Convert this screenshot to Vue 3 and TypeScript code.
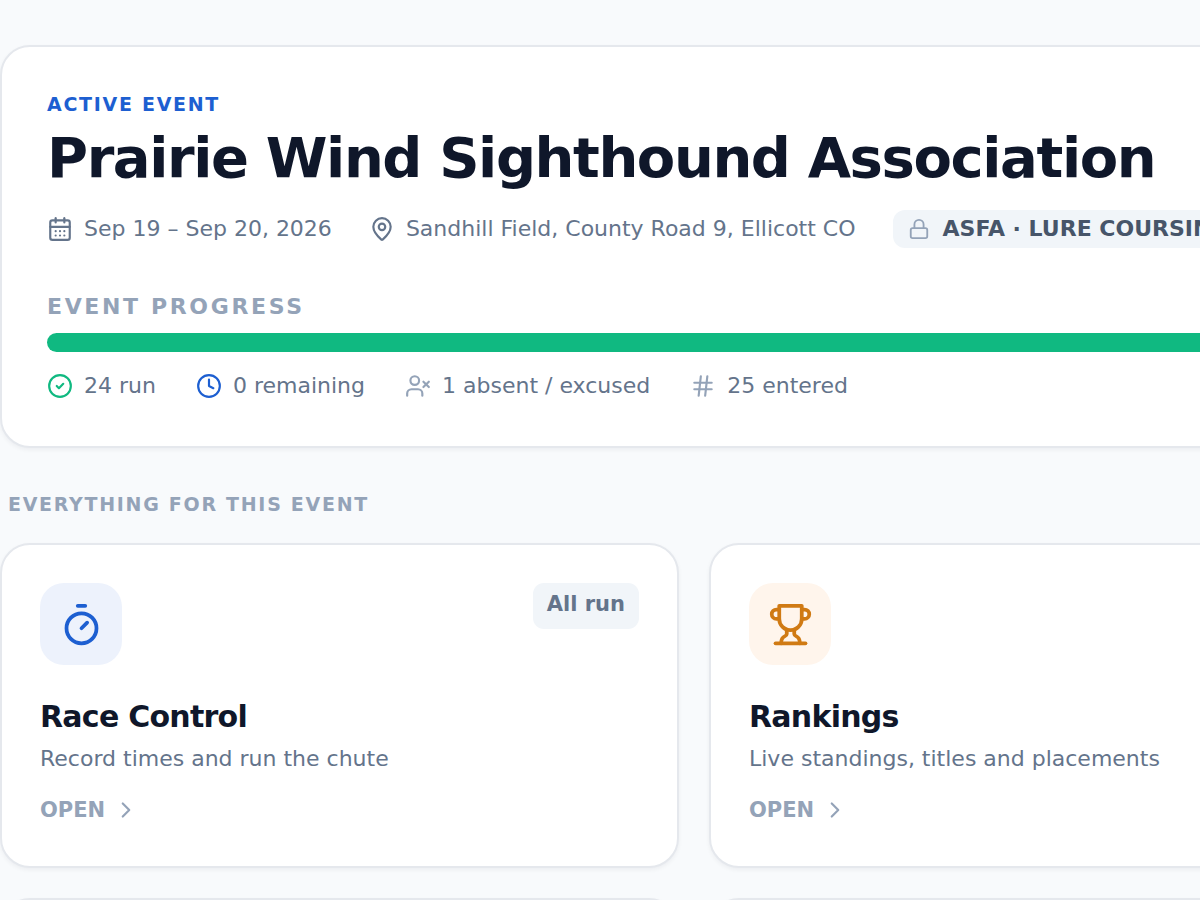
<script setup lang="ts">
interface Tile {
  title: string
  text: string
  tone: 'blue' | 'amber'
  icon: string[]
  badge?: string
}

interface Stat {
  label: string
  tone: 'green' | 'blue' | 'muted'
  icon: string[]
}

const calendar = [
  'M8 2v4', 'M16 2v4', 'M5 4h14a2 2 0 0 1 2 2v14a2 2 0 0 1-2 2H5a2 2 0 0 1-2-2V6a2 2 0 0 1 2-2z', 'M3 10h18',
  'M8 14h.01', 'M12 14h.01', 'M16 14h.01', 'M8 18h.01', 'M12 18h.01', 'M16 18h.01',
]
const pin = [
  'M20 10c0 4.993-5.539 10.193-7.399 11.799a1 1 0 0 1-1.202 0C9.539 20.193 4 14.993 4 10a8 8 0 0 1 16 0',
  'M15 10a3 3 0 1 1-6 0 3 3 0 0 1 6 0z',
]
const lock = [
  'M5 11h14a2 2 0 0 1 2 2v7a2 2 0 0 1-2 2H5a2 2 0 0 1-2-2v-7a2 2 0 0 1 2-2z',
  'M7 11V7a5 5 0 0 1 10 0v4',
]
const ring = 'M22 12a10 10 0 1 1-20 0 10 10 0 0 1 20 0z'

const stats: Stat[] = [
  { label: '24 run', tone: 'green', icon: [ring, 'm9 12 2 2 4-4'] },
  { label: '0 remaining', tone: 'blue', icon: [ring, 'M12 6v6l4 2'] },
  {
    label: '1 absent / excused',
    tone: 'muted',
    icon: ['M16 21v-2a4 4 0 0 0-4-4H6a4 4 0 0 0-4 4v2', 'M13 7a4 4 0 1 1-8 0 4 4 0 0 1 8 0z', 'm17 8 5 5', 'm22 8-5 5'],
  },
  { label: '25 entered', tone: 'muted', icon: ['M4 9h16', 'M4 15h16', 'M10 3 8 21', 'M16 3l-2 18'] },
]

const tiles: Tile[] = [
  {
    title: 'Race Control',
    text: 'Record times and run the chute',
    tone: 'blue',
    badge: 'All run',
    icon: ['M10 2h4', 'm12 14 3-3', 'M20 14a8 8 0 1 1-16 0 8 8 0 0 1 16 0z'],
  },
  {
    title: 'Rankings',
    text: 'Live standings, titles and placements',
    tone: 'amber',
    icon: [
      'M6 9H4.5a2.5 2.5 0 0 1 0-5H6', 'M18 9h1.5a2.5 2.5 0 0 0 0-5H18', 'M4 22h16',
      'M10 14.66V17c0 .55-.47.98-.97 1.21C7.85 18.75 7 20.24 7 22',
      'M14 14.66V17c0 .55.47.98.97 1.21C16.15 18.75 17 20.24 17 22',
      'M18 2H6v7a6 6 0 0 0 12 0V2Z',
    ],
  },
]

const progress = 100
</script>

<template>
  <div class="page">
    <main class="content">
      <section class="hero">
        <p class="eyebrow">ACTIVE EVENT</p>
        <h1>Prairie Wind Sighthound Association</h1>
        <div class="meta">
          <span class="item">
            <svg class="icon" viewBox="0 0 24 24" aria-hidden="true"><path v-for="d in calendar" :key="d" :d="d" /></svg>
            Sep 19 – Sep 20, 2026
          </span>
          <span class="item">
            <svg class="icon" viewBox="0 0 24 24" aria-hidden="true"><path v-for="d in pin" :key="d" :d="d" /></svg>
            Sandhill Field, County Road 9, Ellicott CO
          </span>
          <span class="chip">
            <svg class="icon small" viewBox="0 0 24 24" aria-hidden="true"><path v-for="d in lock" :key="d" :d="d" /></svg>
            ASFA · LURE COURSING
          </span>
        </div>
        <h2 id="progress-label" class="progress-label">EVENT PROGRESS</h2>
        <div class="track" role="progressbar" aria-labelledby="progress-label" :aria-valuenow="progress">
          <div class="fill" :style="{ width: progress + '%' }"></div>
        </div>
        <ul class="stats">
          <li v-for="s in stats" :key="s.label" class="item">
            <svg class="icon" :class="s.tone" viewBox="0 0 24 24" aria-hidden="true"><path v-for="d in s.icon" :key="d" :d="d" /></svg>
            {{ s.label }}
          </li>
        </ul>
      </section>

      <h2 class="section-title">EVERYTHING FOR THIS EVENT</h2>
      <div class="grid">
        <a v-for="t in tiles" :key="t.title" class="tile" href="#">
          <div class="tile-top">
            <span class="tile-icon" :class="t.tone">
              <svg class="icon large" viewBox="0 0 24 24" aria-hidden="true"><path v-for="d in t.icon" :key="d" :d="d" /></svg>
            </span>
            <span v-if="t.badge" class="badge">{{ t.badge }}</span>
          </div>
          <h3>{{ t.title }}</h3>
          <p class="tile-text">{{ t.text }}</p>
          <span class="open">
            OPEN
            <svg class="icon" viewBox="0 0 24 24" aria-hidden="true"><path d="m9 18 6-6-6-6" /></svg>
          </span>
        </a>
        <div class="tile" aria-hidden="true"></div>
        <div class="tile" aria-hidden="true"></div>
      </div>
    </main>
  </div>
</template>

<style>
body {
  background: #f8fafc;
}
</style>

<style scoped>
* {
  box-sizing: border-box;
}

.page {
  height: 100vh;
  overflow: hidden;
  padding-top: 45px;
  background: #f8fafc;
  color: #64748b;
  font-family: "DejaVu Sans", sans-serif;
  font-size: 22px;
  line-height: 30px;
}

.content {
  width: calc(100% + 188px);
}

h1, h2, h3, p, ul {
  margin: 0;
  padding: 0;
}

.hero, .tile {
  background: #fff;
  border: 2px solid #e5e8ed;
  border-radius: 30px;
  box-shadow: 0 2px 4px rgba(15, 23, 42, 0.05);
}

.hero {
  padding: 42px 45px 45px;
}

.eyebrow {
  color: #1d5fd1;
  font-size: 19px;
  font-weight: 700;
  letter-spacing: 0.09em;
}

h1 {
  margin-top: 4px;
  color: #0f172a;
  font-size: 56px;
  font-weight: 700;
  letter-spacing: -0.025em;
  line-height: 70px;
  white-space: nowrap;
}

.meta, .stats {
  display: flex;
  align-items: center;
  white-space: nowrap;
}

.meta {
  gap: 37px;
  margin-top: 17px;
}

.item, .chip {
  display: flex;
  align-items: center;
  gap: 11px;
}

.chip {
  gap: 13px;
  height: 38px;
  padding: 0 15px;
  border-radius: 12px;
  background: #f1f5f9;
  color: #475569;
  font-weight: 700;
}

.icon {
  flex: none;
  width: 26px;
  height: 26px;
  fill: none;
  stroke: currentColor;
  stroke-width: 2;
  stroke-linecap: round;
  stroke-linejoin: round;
}

.small {
  width: 22px;
  height: 22px;
  color: #94a3b8;
}

.large {
  width: 45px;
  height: 45px;
}

.icon.green { color: #10b981; }
.icon.blue { color: #1d5fd1; }
.icon.muted { color: #94a3b8; }

.progress-label {
  margin-top: 44px;
  color: #94a3b8;
  font-size: 22px;
  line-height: 30px;
  letter-spacing: 0.12em;
}

.track {
  height: 19px;
  margin-top: 11px;
  overflow: hidden;
  border-radius: 10px;
  background: #f1f5f9;
}

.fill {
  height: 100%;
  background: #10b981;
}

.stats {
  gap: 40px;
  margin-top: 19px;
  list-style: none;
}

.section-title {
  margin: 41px 0 24px 8px;
  color: #94a3b8;
  font-size: 19px;
  line-height: 30px;
  letter-spacing: 0.09em;
}

.grid {
  display: grid;
  grid-template-columns: 1fr 1fr;
  gap: 30px;
}

.tile {
  display: block;
  min-height: 325px;
  padding: 38px;
  color: inherit;
  text-decoration: none;
}

.tile-top {
  display: flex;
  justify-content: space-between;
  align-items: flex-start;
}

.tile-icon {
  display: grid;
  place-items: center;
  width: 82px;
  height: 82px;
  border-radius: 24px;
}

.tile-icon.blue {
  background: #edf2fc;
  color: #1d5fd1;
}

.tile-icon.amber {
  background: #fff5ec;
  color: #d07a13;
}

.badge {
  height: 46px;
  padding: 6px 14px;
  border-radius: 11px;
  background: #f1f5f9;
  font-size: 21px;
  font-weight: 700;
}

h3 {
  margin-top: 31px;
  color: #0f172a;
  font-size: 30px;
  line-height: 42px;
  letter-spacing: -0.025em;
}

.tile-text {
  margin-top: 6px;
}

.open {
  display: flex;
  align-items: center;
  gap: 8px;
  margin-top: 21px;
  color: #94a3b8;
  font-size: 21px;
  font-weight: 700;
}
</style>
